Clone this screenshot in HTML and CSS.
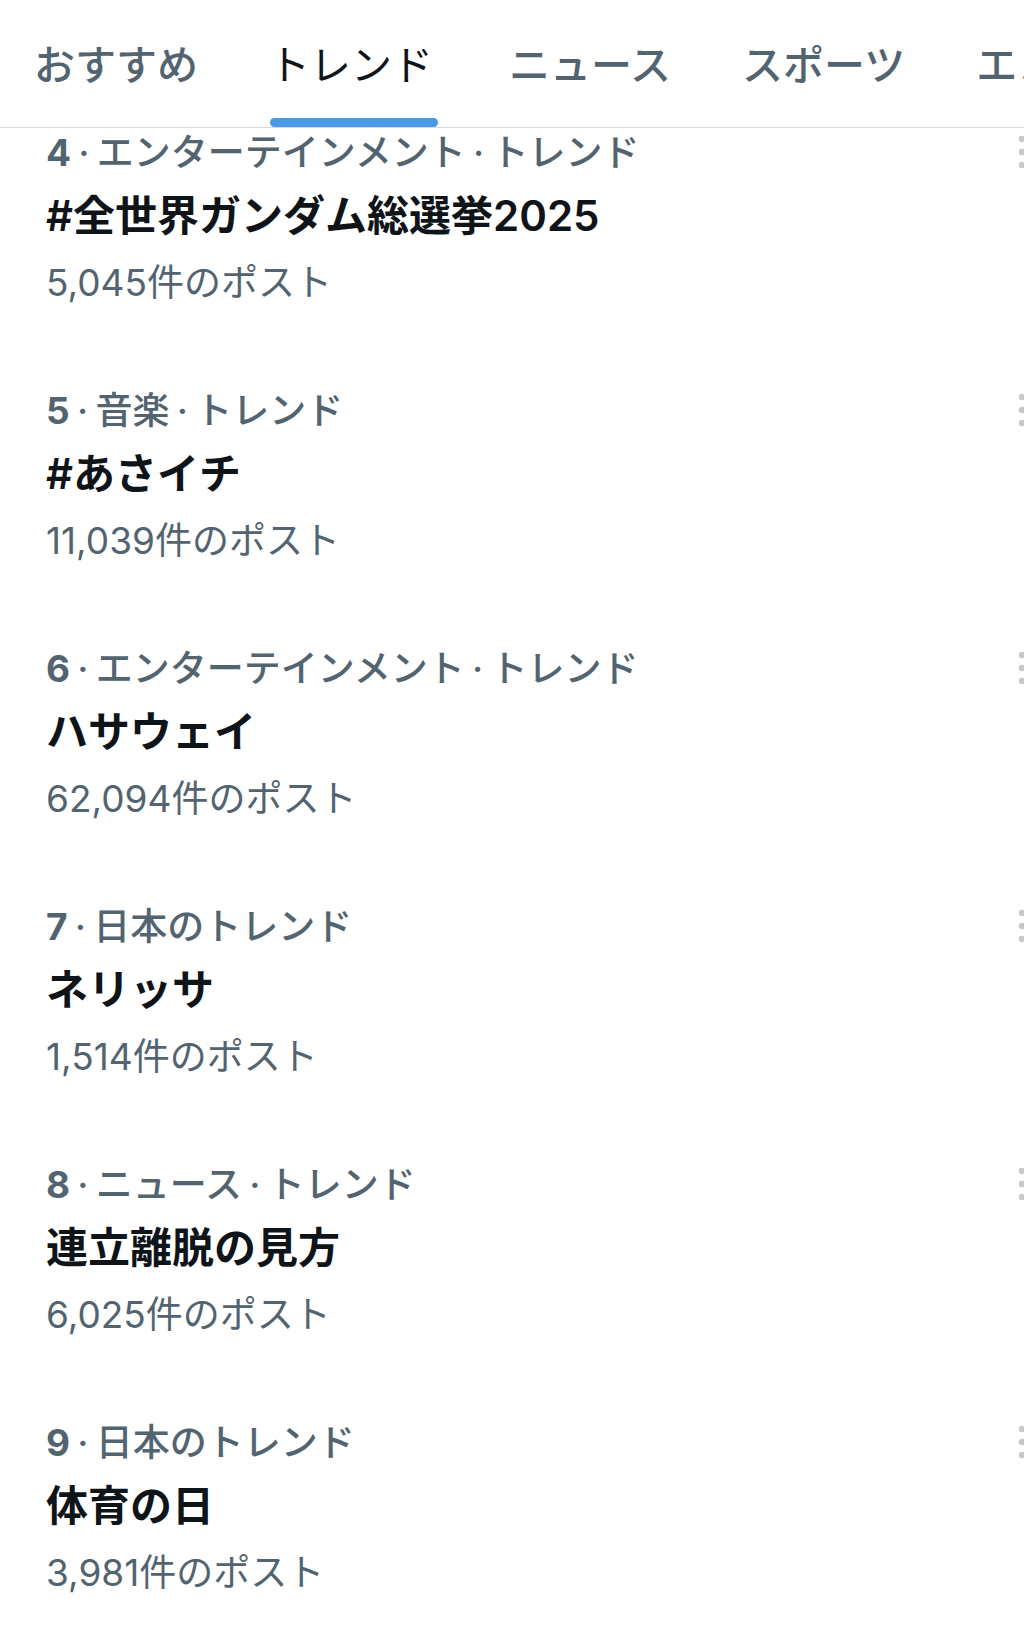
FILE: index.html
```html
<!DOCTYPE html>
<html lang="ja">
<head>
<meta charset="utf-8">
<title>トレンド</title>
<link rel="stylesheet" href="styles.css">
</head>
<body>
<nav class="tabs">
  <div class="tab">おすすめ</div>
  <div class="tab active"><span class="tab-label">トレンド</span><span class="indicator"></span></div>
  <div class="tab">ニュース</div>
  <div class="tab">スポーツ</div>
  <div class="tab">エンターテインメント</div>
</nav>
<main class="list">
  <div class="trend">
    <div class="trend-text">
      <div class="cat"><span class="rank">4</span> · エンターテインメント · トレンド</div>
      <div class="title">#全世界ガンダム総選挙2025</div>
      <div class="posts">5,045件のポスト</div>
    </div>
    <svg class="more" viewBox="0 0 6 36" width="6" height="36"><circle cx="4" cy="5" r="3.2"/><circle cx="4" cy="18" r="3.2"/><circle cx="4" cy="31" r="3.2"/></svg>
  </div>
  <div class="trend">
    <div class="trend-text">
      <div class="cat"><span class="rank">5</span> · 音楽 · トレンド</div>
      <div class="title">#あさイチ</div>
      <div class="posts">11,039件のポスト</div>
    </div>
    <svg class="more" viewBox="0 0 6 36" width="6" height="36"><circle cx="4" cy="5" r="3.2"/><circle cx="4" cy="18" r="3.2"/><circle cx="4" cy="31" r="3.2"/></svg>
  </div>
  <div class="trend">
    <div class="trend-text">
      <div class="cat"><span class="rank">6</span> · エンターテインメント · トレンド</div>
      <div class="title">ハサウェイ</div>
      <div class="posts">62,094件のポスト</div>
    </div>
    <svg class="more" viewBox="0 0 6 36" width="6" height="36"><circle cx="4" cy="5" r="3.2"/><circle cx="4" cy="18" r="3.2"/><circle cx="4" cy="31" r="3.2"/></svg>
  </div>
  <div class="trend">
    <div class="trend-text">
      <div class="cat"><span class="rank">7</span> · 日本のトレンド</div>
      <div class="title">ネリッサ</div>
      <div class="posts">1,514件のポスト</div>
    </div>
    <svg class="more" viewBox="0 0 6 36" width="6" height="36"><circle cx="4" cy="5" r="3.2"/><circle cx="4" cy="18" r="3.2"/><circle cx="4" cy="31" r="3.2"/></svg>
  </div>
  <div class="trend">
    <div class="trend-text">
      <div class="cat"><span class="rank">8</span> · ニュース · トレンド</div>
      <div class="title">連立離脱の見方</div>
      <div class="posts">6,025件のポスト</div>
    </div>
    <svg class="more" viewBox="0 0 6 36" width="6" height="36"><circle cx="4" cy="5" r="3.2"/><circle cx="4" cy="18" r="3.2"/><circle cx="4" cy="31" r="3.2"/></svg>
  </div>
  <div class="trend">
    <div class="trend-text">
      <div class="cat"><span class="rank">9</span> · 日本のトレンド</div>
      <div class="title">体育の日</div>
      <div class="posts">3,981件のポスト</div>
    </div>
    <svg class="more" viewBox="0 0 6 36" width="6" height="36"><circle cx="4" cy="5" r="3.2"/><circle cx="4" cy="18" r="3.2"/><circle cx="4" cy="31" r="3.2"/></svg>
  </div>
</main>
</body>
</html>
```
FILE: styles.css
```css
html, body {
  margin: 0;
  padding: 0;
  background: #ffffff;
  overflow: hidden;
}
body {
  font-family: Inter, "Noto Sans CJK JP", sans-serif;
  color: #0f1419;
  width: 1024px;
}
.tabs {
  display: flex;
  align-items: flex-start;
  gap: 71px;
  padding: 42px 0 0 34px;
  height: 85px;
  border-bottom: 1px solid #d5dbdf;
  overflow: hidden;
  white-space: nowrap;
}
.tab {
  flex-shrink: 0;
  font-size: 41px;
  line-height: 41px;
  color: #536471;
  font-weight: 500;
  font-family: "Noto Sans CJK JP", sans-serif;
}
.tab.active {
  display: flex;
  flex-direction: column;
  align-items: flex-start;
  color: #0f1419;
  font-weight: 400;
}
.indicator {
  display: block;
  width: 168px;
  height: 9px;
  margin: 35px 0 0 1px;
  border-radius: 5px;
  background: #4a98e6;
}
.list {
  display: flex;
  flex-direction: column;
}
.trend {
  display: flex;
  align-items: flex-start;
  padding: 0 0 76px 46px;
}
.trend-text {
  flex: 1;
  white-space: nowrap;
}
.cat {
  font-size: 37px;
  line-height: 49px;
  font-weight: 500;
  word-spacing: -2.6px;
  color: #536471;
}
.rank {
  font-weight: 700;
}
.title {
  font-size: 42px;
  line-height: 78px;
  font-weight: 600;
  color: #0f1419;
}
.posts {
  font-size: 37px;
  line-height: 55px;
  font-weight: 400;
  color: #536471;
}
.more {
  flex-shrink: 0;
  margin-top: 6px;
  fill: #c4c9cd;
}
```
